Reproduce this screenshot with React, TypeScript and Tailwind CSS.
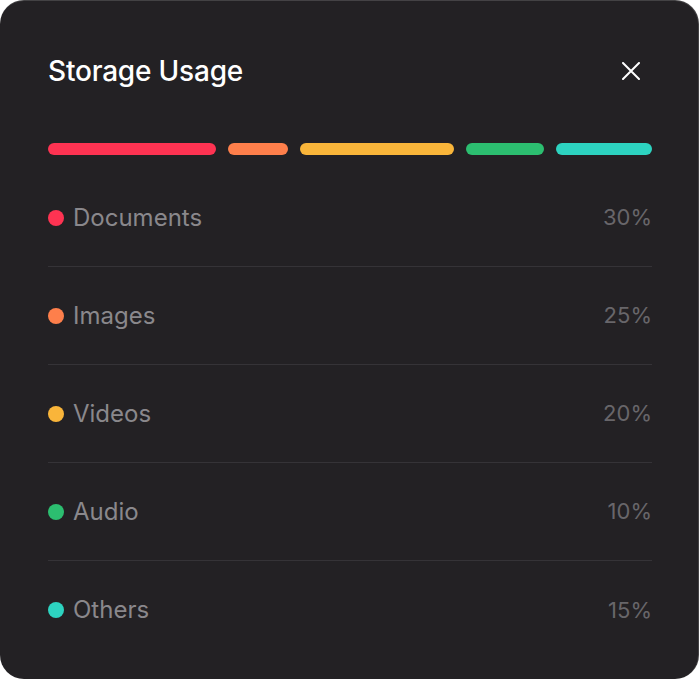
const segments = [
  { color: "bg-[#fe3352]", width: "w-[168px]" },
  { color: "bg-[#fe7f4b]", width: "w-[60px]" },
  { color: "bg-[#f9b53a]", width: "w-[154px]" },
  { color: "bg-[#2cbe70]", width: "w-[78px]" },
  { color: "bg-[#2dd3c0]", width: "w-[96px]" },
];

const rows = [
  { label: "Documents", value: "30%", dot: "bg-[#fe3352]" },
  { label: "Images", value: "25%", dot: "bg-[#fe7f4b]" },
  { label: "Videos", value: "20%", dot: "bg-[#f9b53a]" },
  { label: "Audio", value: "10%", dot: "bg-[#2cbe70]" },
  { label: "Others", value: "15%", dot: "bg-[#2dd3c0]" },
];

export default function App() {
  return (
    <div className="w-[700px] h-[679px] bg-white font-['Inter',sans-serif]">
      <div className="w-[699px] h-[679px] rounded-[24px] bg-[#232124] border-t border-r border-white/15 pl-[48px] pr-[46px] pt-[50px] flex flex-col">
        <div className="flex items-center justify-between h-10">
          <h2 className="text-[28px] font-medium text-white tracking-[-0.2px]">Storage Usage</h2>
          <button className="w-6 h-6 flex items-center justify-center text-white mr-[9px]">
            <svg width="18" height="18" viewBox="0 0 18 18" fill="none">
              <path d="M1 1L17 17M17 1L1 17" stroke="currentColor" strokeWidth="2" strokeLinecap="round" />
            </svg>
          </button>
        </div>

        <div className="flex gap-3 mt-[52px] h-3">
          {segments.map((s, i) => (
            <div key={i} className={`${s.width} ${s.color} h-3 shrink-0 rounded-full`} />
          ))}
        </div>

        <div className="mt-[14px] w-[604px]">
          {rows.map((r, i) => (
            <div
              key={r.label}
              className={`flex items-center justify-between h-[98px] ${i < rows.length - 1 ? "border-b border-[#353337]" : ""}`}
            >
              <div className="flex items-center gap-[9px]">
                <span className={`w-4 h-4 rounded-full ${r.dot}`} />
                <span className="text-[24px] text-[#8a888c]">{r.label}</span>
              </div>
              <span className="text-[22px] text-[#68666a]">{r.value}</span>
            </div>
          ))}
        </div>
      </div>
    </div>
  );
}
